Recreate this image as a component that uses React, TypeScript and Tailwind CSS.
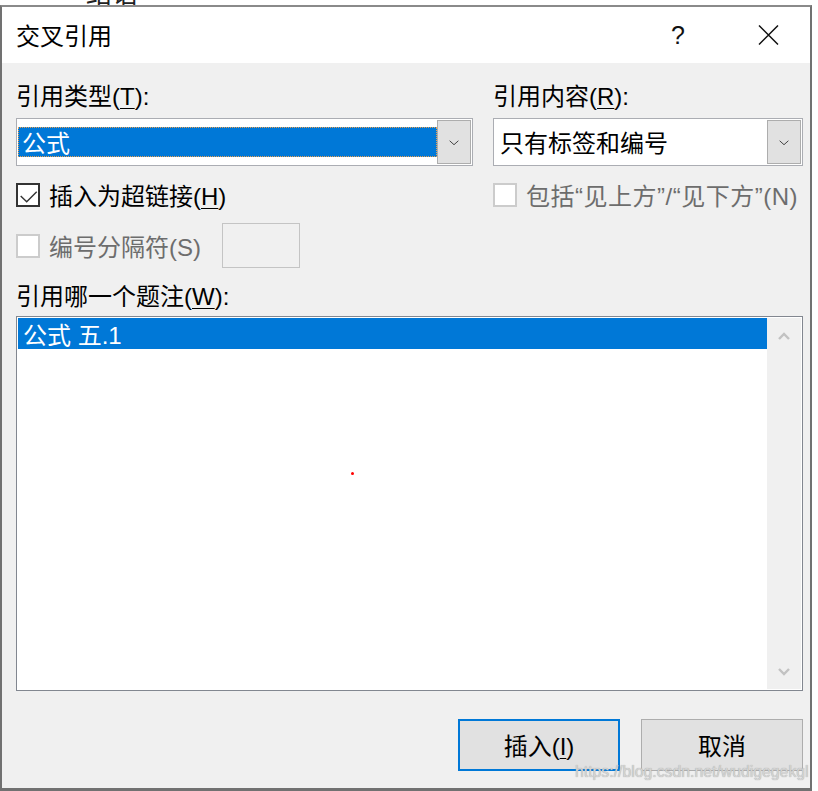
import React from 'react';

const cjk = { fontFamily: '"Liberation Sans", "Noto Sans CJK SC", sans-serif' };

// nudges mixed Latin/CJK text down so the ideographs sit where the dialog font draws them
const T: React.FC<{ className?: string; children: React.ReactNode }> = ({ className = '', children }) => (
  <span className={`relative top-[2px] whitespace-nowrap ${className}`}>{children}</span>
);

const Chevron: React.FC<{ up?: boolean; thick?: boolean; color?: string }> = ({ up, thick, color = '#3c3c3c' }) => (
  <svg width="12" height={thick ? 8 : 7} viewBox="0 0 12 8" fill="none">
    {up ? (
      <path d="M1 7 L6 2 L11 7" stroke={color} strokeWidth={thick ? 2.4 : 1.1} />
    ) : (
      <path d={thick ? 'M1 1 L6 6 L11 1' : 'M1 2 L6 6.5 L11 2'} stroke={color} strokeWidth={thick ? 2.4 : 1.1} />
    )}
  </svg>
);

const Mn: React.FC<{ children: React.ReactNode }> = ({ children }) => (
  <span className="underline underline-offset-[3px] decoration-1">{children}</span>
);

const Combo: React.FC<{ value: string; selected?: boolean; width: string }> = ({ value, selected, width }) => (
  <div className={`flex h-[48px] ${width} border border-[#abadb3] bg-white p-[1px]`}>
    <div className="flex flex-1 items-center">
      {selected ? (
        <div className="flex h-[30px] w-full items-center border border-dotted border-[#e8a050] bg-[#0078d7] pl-[3px] text-white">
          <T>{value}</T>
        </div>
      ) : (
        <div className="pl-[5px] text-black">
          <T>{value}</T>
        </div>
      )}
    </div>
    <div className="flex w-[34px] items-center justify-center border border-[#adadad] bg-[#e1e1e1]">
      <Chevron />
    </div>
  </div>
);

const CheckBox: React.FC<{ checked?: boolean; disabled?: boolean }> = ({ checked, disabled }) => (
  <div
    className={`flex h-[24px] w-[24px] shrink-0 items-center justify-center border-2 bg-white ${
      disabled ? 'border-[#cccccc]' : 'border-[#333333]'
    }`}
  >
    {checked && (
      <svg width="20" height="20" viewBox="0 0 20 20" fill="none">
        <path d="M2.7 11 L8.7 16.7 L18.7 6.7" stroke="#333" strokeWidth="1.4" />
      </svg>
    )}
  </div>
);

export default function App() {
  return (
    <div className="relative h-[791px] w-[818px] overflow-hidden bg-white text-[24px] leading-[24px]" style={cjk}>
      {/* document text behind the dialog */}
      <div className="absolute left-[86px] top-[-19px] text-[26px] leading-[26px] text-[#222]">结语</div>

      <div className="absolute left-0 top-[5px] flex h-[786px] w-[812px] flex-col border-x-2 border-b-[3px] border-t-2 border-[#717171] border-t-[#8a8a8a]">
        {/* title bar */}
        <div className="flex h-[56px] items-center bg-white pl-[14px]">
          <T className="text-black">交叉引用</T>
          <span className="ml-auto w-[24px] text-center text-[25px] text-[#111]">?</span>
          <svg className="ml-[68px] mr-[31px]" width="21" height="20" viewBox="0 0 21 20" fill="none">
            <path d="M1 0.5 L20 19.5 M20 0.5 L1 19.5" stroke="#111" strokeWidth="1.5" />
          </svg>
        </div>

        {/* body */}
        <div className="flex flex-1 flex-col bg-[#f0f0f0] pl-[14px] pt-[20px]">
          <div className="flex gap-[20px]">
            <div className="flex w-[457px] shrink-0 flex-col">
              <div className="h-[24px]">
                <T>
                  引用类型(<Mn>T</Mn>):
                </T>
              </div>
              <div className="mt-[11px]">
                <Combo value="公式" selected width="w-[457px]" />
              </div>
            </div>
            <div className="flex w-[310px] shrink-0 flex-col">
              <div className="h-[24px]">
                <T>
                  引用内容(<Mn>R</Mn>):
                </T>
              </div>
              <div className="mt-[11px]">
                <Combo value="只有标签和编号" width="w-[310px]" />
              </div>
            </div>
          </div>

          <div className="mt-[17px] flex h-[24px]">
            <div className="flex w-[477px] shrink-0 items-center gap-[9px]">
              <CheckBox checked />
              <T className="text-black">
                插入为超链接(<Mn>H</Mn>)
              </T>
            </div>
            <div className="flex items-center gap-[9px]">
              <CheckBox disabled />
              <T className="tracking-[0.5px] text-[#6d6d6d]">包括“见上方”/“见下方”(N)</T>
            </div>
          </div>

          <div className="mt-[16px] flex h-[45px] items-center">
            <CheckBox disabled />
            <T className="ml-[9px] text-[#6d6d6d]">编号分隔符(S)</T>
            <div className="ml-[21px] h-[45px] w-[78px] border border-[#c4c4c4] bg-[#f0f0f0]" />
          </div>

          <div className="mt-[15px] h-[24px]">
            <T>
              引用哪一个题注(<Mn>W</Mn>):
            </T>
          </div>

          <div className="mt-[9px] flex h-[375px] w-[787px] border border-[#828790] bg-white p-[1px]">
            <div className="flex-1">
              <div className="flex h-[31px] items-center bg-[#0078d7] pl-[5px] text-white">
                <T>公式 五.1</T>
              </div>
            </div>
            <div className="flex w-[34px] flex-col items-center justify-between bg-[#f0f0f0] pb-[13px] pt-[14px]">
              <Chevron up thick color="#c2c2c2" />
              <Chevron thick color="#c2c2c2" />
            </div>
          </div>

          <div className="mt-[28px] flex w-[787px] justify-end gap-[21px]">
            <button className="flex h-[52px] w-[162px] items-center justify-center border-2 border-[#0078d7] bg-[#e1e1e1] text-black">
              <T>
                插入(<Mn>I</Mn>)
              </T>
            </button>
            <button className="flex h-[52px] w-[162px] items-center justify-center border border-[#adadad] bg-[#e1e1e1] text-black">
              <T>取消</T>
            </button>
          </div>
        </div>
      </div>

      {/* stray red dot */}
      <div className="absolute left-[351px] top-[472px] h-[3px] w-[3px] rounded-full bg-[#ff0000]" />

      {/* watermark */}
      <div
        className="absolute left-[575px] top-[762px] text-[15.8px] leading-[20px] text-[#d4d4d4]"
        style={{ textShadow: '0 0 1px #9a9a9a' }}
      >
        https://blog.csdn.net/wudigegekgl
      </div>
    </div>
  );
}
